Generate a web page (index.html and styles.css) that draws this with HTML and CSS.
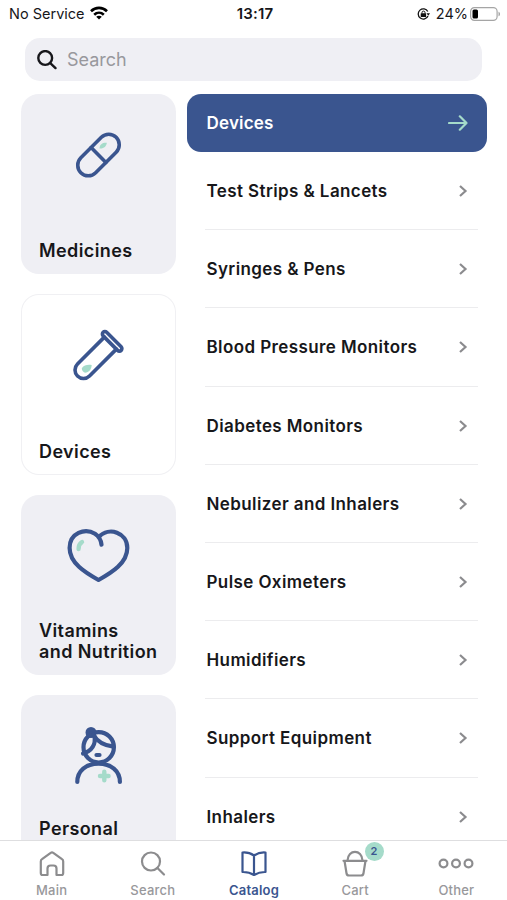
FILE: index.html
```html
<!DOCTYPE html>
<html lang="en">
<head>
    <meta charset="UTF-8">
    <meta name="viewport" content="width=device-width, initial-scale=1.0">
    <title>Catalog</title>
    <link rel="stylesheet" href="styles.css">
</head>
<body>
    <header class="status-bar">
        <div class="status-left">
            <span class="carrier">No Service</span>
            <svg class="wifi" width="18" height="14" viewBox="0 0 18 14" fill="none" stroke="#000" stroke-width="2.6">
                <path d="M1 5.2C5.5.8 12.5.8 17 5.2"/>
                <path d="M4.2 8.7C7 6 11 6 13.800 8.7"/>
                <path d="M9 13.5L6.200 10.700C7.800 9.300 10.200 9.300 11.800 10.700Z" fill="#000" stroke="none"/>
            </svg>
        </div>
        <span class="time">13:17</span>
        <div class="status-right">
            <svg class="lock" width="13" height="12" viewBox="0 0 13 12" fill="none" stroke="#111" stroke-width="1.3">
                <path d="M10.800 3.500A5.100 5.100 0 1 0 11 8"/>
                <path d="M9.500 5.300H13L11.300 7.800Z" fill="#111" stroke="none"/>
                <rect x="3.700" y="5.200" width="5.400" height="3.800" rx=".5" fill="#111" stroke="none"/>
                <path d="M5 5.500V4.600a1.500 1.500 0 0 1 3 0V5.500" stroke-width="1"/>
            </svg>
            <span>24%</span>
            <svg class="battery" width="31" height="14" viewBox="0 0 31 14">
                <rect x=".6" y=".6" width="26.500" height="12.800" rx="3.800" fill="none" stroke="#a5a5a5" stroke-width="1.2"/>
                <rect x="2.500" y="2.500" width="5.500" height="9" rx="1.500" fill="#000"/>
                <path d="M28.500 4.700C30.500 5.300 30.500 8.700 28.500 9.300Z" fill="#a5a5a5"/>
            </svg>
        </div>
    </header>

    <div class="search">
        <svg width="20" height="20" viewBox="0 0 20 20" fill="none" stroke="#17171b" stroke-width="2.4" stroke-linecap="round">
            <circle cx="8.200" cy="8" r="6.900"/>
            <path d="M13.300 13.100L18.500 18.100"/>
        </svg>
        <span>Search</span>
    </div>

    <main class="catalog">
        <nav class="categories">
            <a class="card">
                <svg class="card-icon" viewBox="0 0 70 70">
                    <g transform="translate(34.500 35) rotate(-45)">
                        <rect x="-25" y="-10.500" width="50" height="21" rx="10.500"/>
                        <path d="M0-10.500V10.500"/>
                    </g>
                    <path class="mint" d="M35.500 28.500C35.500 24.500 38.500 22.500 42.800 22.800C42.500 26.500 39.500 29 35.500 28.500Z"/>
                </svg>
                <span class="card-title">Medicines</span>
            </a>
            <a class="card card-active">
                <svg class="card-icon" viewBox="0 0 70 70">
                    <path class="mint" d="M17.800 48.300C20 45 23.500 44.500 27.700 45C27.500 49.500 25 52.500 21 52.700C19 52 17.800 50.500 17.800 48.300Z"/>
                    <g transform="translate(19.500 50) rotate(-45)">
                        <path d="M38-8.500H0A8.500 8.500 0 0 0 0 8.500H38"/>
                        <rect x="38" y="-12.750" width="5" height="25.500" rx="2.500"/>
                    </g>
                </svg>
                <span class="card-title">Devices</span>
            </a>
            <a class="card">
                <svg class="card-icon bold" viewBox="0 0 70 70">
                    <path d="M37.500 23.700C37 19 35 15.500 31 12.800C21 6.500 5.600 12 5.600 27C5.600 42 21 51.500 34.500 59C48 51.500 63.300 42 63.300 27C63.300 11.500 45 5.500 35 15.800"/>
                    <path class="mint-line" d="M14.600 28Q14.300 23.500 18 21"/>
                </svg>
                <span class="card-title">Vitamins<br>and Nutrition</span>
            </a>
            <a class="card card-last">
                <svg class="card-icon bold" viewBox="0 0 70 70">
                    <circle cx="34.700" cy="26.300" r="15.200"/>
                    <circle cx="27" cy="11.500" r="3.400" fill="#3a558f"/>
                    <path d="M29.500 14C33.500 21 40 24.500 49.500 25.700"/>
                    <path d="M30.500 15.500C32 23 28 30 19 32.500"/>
                    <path d="M32.500 34H35.500"/>
                    <path d="M13.300 61C13.300 50 22 42.600 34.500 42.600S55.900 50 55.900 61"/>
                    <path class="mint-line" d="M40.300 50.700V59.300M36 55H44.600"/>
                </svg>
                <span class="card-title">Personal</span>
            </a>
        </nav>

        <section class="subcategories">
            <a class="current">
                <span>Devices</span>
                <svg width="20" height="16" viewBox="0 0 20 16">
                    <path d="M1 8H18.500M11.800 1.300L18.500 8L11.800 14.700"/>
                </svg>
            </a>
            <ul class="list">
                <li><span>Test Strips &amp; Lancets</span><svg class="chevron" viewBox="0 0 8 12"><path d="M1 1L6.500 6L1 11"/></svg></li>
                <li><span>Syringes &amp; Pens</span><svg class="chevron" viewBox="0 0 8 12"><path d="M1 1L6.500 6L1 11"/></svg></li>
                <li><span>Blood Pressure Monitors</span><svg class="chevron" viewBox="0 0 8 12"><path d="M1 1L6.500 6L1 11"/></svg></li>
                <li><span>Diabetes Monitors</span><svg class="chevron" viewBox="0 0 8 12"><path d="M1 1L6.500 6L1 11"/></svg></li>
                <li><span>Nebulizer and Inhalers</span><svg class="chevron" viewBox="0 0 8 12"><path d="M1 1L6.500 6L1 11"/></svg></li>
                <li><span>Pulse Oximeters</span><svg class="chevron" viewBox="0 0 8 12"><path d="M1 1L6.500 6L1 11"/></svg></li>
                <li><span>Humidifiers</span><svg class="chevron" viewBox="0 0 8 12"><path d="M1 1L6.500 6L1 11"/></svg></li>
                <li><span>Support Equipment</span><svg class="chevron" viewBox="0 0 8 12"><path d="M1 1L6.500 6L1 11"/></svg></li>
                <li><span>Inhalers</span><svg class="chevron" viewBox="0 0 8 12"><path d="M1 1L6.500 6L1 11"/></svg></li>
            </ul>
        </section>
    </main>

    <footer class="tab-bar">
        <a class="tab">
            <svg viewBox="0 0 28 28">
                <path d="M9.500 25H4.500Q2.800 25 2.800 23V11.500Q2.800 10 4 9.200L12.700 2.800Q14 1.900 15.300 2.800L24 9.200Q25.200 10 25.200 11.500V23Q25.200 25 23.500 25H18.500V18.500Q18.500 15.500 15.500 15.500H12.500Q9.500 15.500 9.500 18.500Z"/>
            </svg>
            <span>Main</span>
        </a>
        <a class="tab">
            <svg viewBox="0 0 28 28">
                <circle cx="12" cy="11.500" r="9"/>
                <path d="M18.500 18L25 24.500"/>
            </svg>
            <span>Search</span>
        </a>
        <a class="tab tab-active">
            <svg viewBox="0 0 28 28">
                <path d="M14 5.500Q9 2 2.500 2.500V22Q9 21.800 14 25Q19 21.800 25.500 22V2.500Q19 2 14 5.500ZM14 5.500V25"/>
            </svg>
            <span>Catalog</span>
        </a>
        <a class="tab">
            <svg viewBox="0 0 28 28">
                <path d="M2.500 10.800H25.500M3.500 10.800L5.500 23.200Q5.900 25.500 8 25.500H20Q22.100 25.500 22.500 23.200L24.500 10.800"/>
                <path d="M6.500 10.500C7-1 21-1 21.500 10.500"/>
            </svg>
            <span>Cart</span>
            <b class="badge">2</b>
        </a>
        <a class="tab">
            <svg class="dots" viewBox="0 0 36 28">
                <circle cx="5.500" cy="13.500" r="3.900"/>
                <circle cx="18" cy="13.500" r="3.900"/>
                <circle cx="30.500" cy="13.500" r="3.900"/>
            </svg>
            <span>Other</span>
        </a>
    </footer>
</body>
</html>
```

FILE: styles.css
```css
:root {
    --blue: #3a558f;
    --mint: #a5dbca;
    --gray-bg: #efeff4;
    --gray: #8c8c8e;
    --text: #17171a;
}

* {
    margin: 0;
    padding: 0;
    box-sizing: border-box;
}

body {
    height: 900px;
    display: flex;
    flex-direction: column;
    overflow: hidden;
    background: #fff;
    color: var(--text);
    font-family: Inter, "Liberation Sans", sans-serif;
}

svg {
    display: block;
    flex: none;
}

/* Status bar */
.status-bar {
    height: 27px;
    flex: none;
    display: grid;
    grid-template-columns: 1fr auto 1fr;
    align-items: center;
    padding: 0 6px 0 9px;
    font-size: 14.5px;
}

.status-left,
.status-right {
    display: flex;
    align-items: center;
}

.status-left {
    gap: 5px;
}

.wifi {
    margin-top: -2px;
}

.time {
    font-weight: 600;
    font-size: 15px;
    letter-spacing: 0.2px;
}

.status-right {
    justify-content: flex-end;
    font-size: 14.5px;
}

.lock {
    margin-right: 6px;
}

.battery {
    margin-left: 2px;
}

/* Search field */
.search {
    height: 43px;
    flex: none;
    margin: 11px 25px 0;
    padding: 0 12px;
    display: flex;
    align-items: center;
    gap: 10px;
    border-radius: 15px;
    background: var(--gray-bg);
    color: #98989d;
    font-size: 18px;
}

/* Catalog columns */
.catalog {
    flex: 1;
    min-height: 0;
    display: flex;
    align-items: flex-start;
    gap: 11px;
    padding: 13px 20px 0 21px;
    overflow: hidden;
}

.categories {
    width: 155px;
    flex: none;
    display: flex;
    flex-direction: column;
    gap: 20px;
}

.card {
    height: 180.3px;
    flex: none;
    display: flex;
    flex-direction: column;
    justify-content: space-between;
    padding: 26px 0 13px 18px;
    border-radius: 18px;
    background: var(--gray-bg);
}

.card-active {
    background: #fff;
    box-shadow: inset 0 0 0 1px #f0f0f3;
}

.card-last {
    padding-bottom: 36px;
}

.card-icon {
    width: 70px;
    height: 70px;
    margin-left: 25px;
    fill: none;
    stroke: var(--blue);
    stroke-width: 3.6;
    stroke-linecap: round;
    stroke-linejoin: round;
}

.bold {
    stroke-width: 4.2;
}

.card-icon .mint {
    fill: var(--mint);
    stroke: none;
}

.card-icon .mint-line {
    stroke: var(--mint);
    stroke-width: 4.4;
}

.card-title {
    font-size: 18px;
    font-weight: 600;
    line-height: 21px;
    letter-spacing: 0.4px;
    white-space: nowrap;
}

.subcategories {
    flex: 1;
    font-size: 17px;
    font-weight: 600;
    letter-spacing: 0.2px;
}

.current {
    height: 58px;
    display: flex;
    align-items: center;
    justify-content: space-between;
    padding: 0 19px 0 19.5px;
    border-radius: 14px;
    background: var(--blue);
    color: #fff;
}

.current svg {
    fill: none;
    stroke: var(--mint);
    stroke-width: 2.2;
    stroke-linecap: round;
    stroke-linejoin: round;
}

.list {
    list-style: none;
    padding: 0 9px 0 18px;
    letter-spacing: 0.4px;
}

.list li {
    height: 78.2px;
    display: flex;
    align-items: center;
    justify-content: space-between;
    padding: 1px 11px 0 1.5px;
    border-bottom: 1px solid #ececee;
}

.chevron {
    width: 8px;
    height: 12px;
    fill: none;
    stroke: #8b8b8e;
    stroke-width: 2.2;
    overflow: visible;
}

/* Bottom tabs */
.tab-bar {
    height: 60px;
    flex: none;
    display: grid;
    grid-template-columns: repeat(5, 1fr);
    padding-left: 1px;
    border-top: 1px solid #dedee0;
    background: #fff;
}

.tab {
    position: relative;
    display: flex;
    flex-direction: column;
    align-items: center;
    padding-top: 9px;
    color: #98989b;
    font-size: 13px;
    font-weight: 500;
    line-height: 16px;
    letter-spacing: 0.2px;
}

.tab svg {
    width: 28px;
    height: 28px;
    margin-bottom: 4px;
    fill: none;
    stroke: var(--gray);
    stroke-width: 2.2;
    stroke-linecap: round;
    stroke-linejoin: round;
}

.tab .dots {
    width: 36px;
}

.tab-active {
    color: var(--blue);
    font-weight: 600;
}

.tab-active svg {
    stroke: var(--blue);
}

.badge {
    position: absolute;
    top: 1px;
    left: 60px;
    width: 19px;
    height: 19px;
    border-radius: 50%;
    background: var(--mint);
    color: var(--blue);
    font-size: 11px;
    font-weight: 600;
    line-height: 19px;
    text-align: center;
}
```
